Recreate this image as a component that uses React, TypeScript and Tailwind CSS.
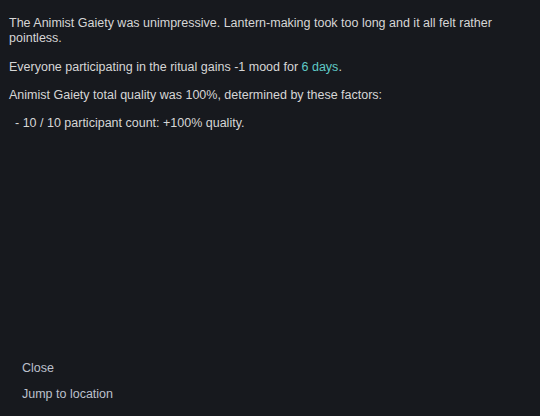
export default function App() {
  return (
    <div className="w-[540px] h-[416px] bg-[#17191e] flex flex-col justify-between text-[12.5px] leading-[15px] text-[#d6d6d6] font-['Liberation_Sans',Arial,sans-serif]">
      <div className="pt-[16px] pl-[9px] pr-[30px] flex flex-col">
        <p>
          The Animist Gaiety was unimpressive. Lantern-making took too long and it all felt rather
          pointless.
        </p>
        <p className="mt-[14px]">
          Everyone participating in the ritual gains -1 mood for <span className="text-[#5fc9c6]">6 days</span>.
        </p>
        <p className="mt-[13px]">Animist Gaiety total quality was 100%, determined by these factors:</p>
        <p className="mt-[13px] pl-[6px]">- 10 / 10 participant count: +100% quality.</p>
      </div>
      <div className="flex flex-col gap-[11px] px-[22px] pb-[14px] text-[#bcc0cc]">
        <button className="text-left">Close</button>
        <button className="text-left">Jump to location</button>
      </div>
    </div>
  );
}
